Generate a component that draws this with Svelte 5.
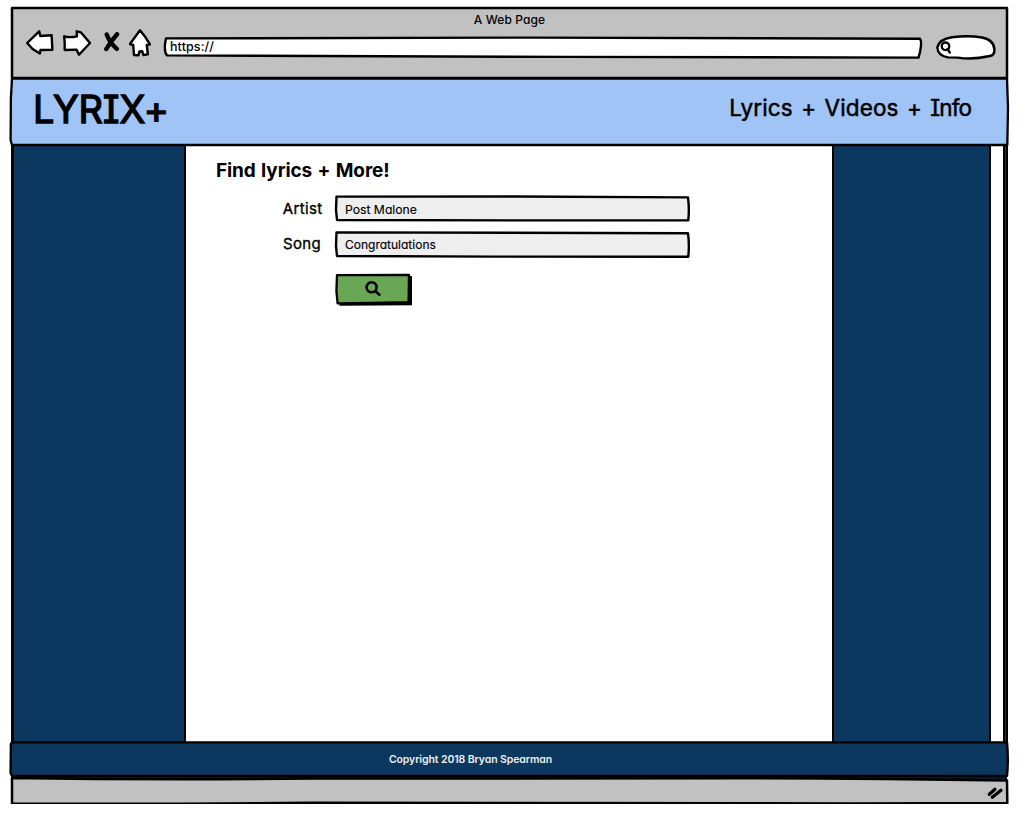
<script>
  let artist = $state('Post Malone');
  let song = $state('Congratulations');
</script>

{#snippet sketch(d, fill, width = 2.5)}
  <svg class="sketch" aria-hidden="true"><path {d} {fill} stroke="#000" stroke-width={width} stroke-linejoin="round" /></svg>
{/snippet}

<div class="window">
  <div class="chrome">
    {@render sketch('M0 0L995 0L995 70L0 70Z', '#c1c1c1')}
    <div class="title">A Web Page</div>
    <div class="toolbar">
      <svg class="back" width="28" height="26" viewBox="0 0 28 26"><path d="M1.2 13L13.2 1.3L14.3 6L25.6 5.2L26.4 19.8L14.5 20L13.8 23.6L6.6 19Z" /></svg>
      <svg class="forward" width="28" height="26" viewBox="0 0 28 26"><path d="M1.2 6.3Q7 8 14 6.3L13.7 1.3L18 2.5L27 13L16 24.7L13.5 19.6L1.7 20L1.7 13Z" /></svg>
      <svg class="stop" width="16" height="20" viewBox="0 0 16 20"><path d="M2.7 2.5Q6 11 12.8 16.8M13.1 2.3Q6.2 10 2.3 17" /></svg>
      <svg class="home" width="22" height="28" viewBox="0 0 22 28"><path d="M11 1.3Q16 7 21 15.3L17.8 16L18.8 25.4L14.4 26L13.2 22.2L10.4 22.5L9.5 26.2L5 26L4.2 16L.9 15Z" /></svg>
      <div class="address">
        {@render sketch('M1 .4Q180 -.4 370 -.4L755 .8Q757.2 3 755 14L753.5 19.6L400 18.9L2 17.4Q-1 14 .2 5Z', '#fff', 2.4)}
        <span>https://</span>
      </div>
      <svg class="find" width="60" height="26" viewBox="0 0 60 26">
        <path d="M1.3 12.5Q3 4 16 2.2Q33 .3 46 2.5Q58 5 58.3 14Q59 20 54 21Q36 25 22 22.6L12 22.4Q2 21 1.3 12.5Z" />
        <g><circle cx="9.5" cy="11.3" r="3.8" /><path d="M11.5 14L13.8 17.5" /></g>
      </svg>
    </div>
  </div>

  <header>
    {@render sketch('M0 .6L995 .6L996 30L995.3 67L0 67L-1.4 62L-1.1 20Z', '#a0c4f5', 2.3)}
    <h1>LYRIX+</h1>
    <p>Lyrics + Videos + <span>Info</span></p>
  </header>

  <main>
    <div class="side left"></div>
    <section>
      <h2>Find lyrics + More!</h2>
      <form onsubmit={(e) => e.preventDefault()}>
        <label for="artist">Artist</label>
        <div class="field">
          {@render sketch('M.5 .6L180 .5L352 1.4Q353.5 13 352.3 24.3L180 24.4L1 24L0 14Z', '#eee', 2.4)}
          <input id="artist" bind:value={artist} spellcheck="false" />
        </div>
        <label for="song">Song</label>
        <div class="field">
          {@render sketch('M.5 .4L352 1.2Q353.5 12 352.3 24.7L160 24.6L1 24L0 14Z', '#eee', 2.4)}
          <input id="song" bind:value={song} spellcheck="false" />
        </div>
        <button aria-label="Search">
          <svg class="sketch" aria-hidden="true">
            <path d="M3.5 5L76 1L76 30.2L3.5 30.7Z" fill="#000" />
            <path d="M1 .2L73 0L72.6 27.2L33 27.8L1.6 28.4L.4 16Z" fill="#6aa754" stroke="#000" stroke-width="2.3" stroke-linejoin="round" />
          </svg>
          <svg class="lens" width="18" height="18" viewBox="0 0 18 18"><circle cx="6.6" cy="7.2" r="5" /><path d="M10.2 11L14.4 14.7" /></svg>
        </button>
      </form>
    </section>
    <div class="side right"></div>
    <div class="scroll"></div>
  </main>

  <footer>
    {@render sketch('M0 .4L995 .4Q996.6 18 995 34L0 34L-1.4 31L-1.1 2Z', '#0c3860', 2.4)}
    <span>Copyright 2018 Bryan Spearman</span>
  </footer>
  <div class="status">
    {@render sketch('M0 1Q140 3 300 1.6L720 1.2Q860 1.5 995 3.5L995.3 26L840 26.4L300 25.7Q140 27.2 0 26.4Z', '#c1c1c1', 2.5)}
    <svg class="grip" width="18" height="15" viewBox="0 0 18 15"><path d="M2.3 9.3L7.9 4.2M5.3 12.3L14 5.2" /></svg>
  </div>
</div>

<style>
  :global(body) { margin: 0; background: #fff; }
  .window {
    width: 995px; margin-left: 12px; padding-top: 8px;
    font-family: Inter, "Liberation Sans", sans-serif;
    font-feature-settings: "cv11", "cv08";
    color: #000;
  }
  .chrome, header, footer, .status, .address, .field, button { position: relative; }
  .sketch { position: absolute; inset: 0; width: 100%; height: 100%; overflow: visible; }
  .sketch ~ * { position: relative; }
  svg { fill: none; stroke-linecap: round; stroke-linejoin: round; flex: none; display: block; }

  .chrome { height: 70px; }
  .title { height: 22px; line-height: 23px; text-align: center; font-size: 12px; letter-spacing: .1px; font-weight: 500; }
  .toolbar { display: flex; align-items: flex-start; padding-left: 13.5px; }
  .toolbar > svg { stroke: #000; stroke-width: 2.4; fill: #fff; }
  .forward { margin-left: 9.5px; }
  .toolbar > .stop { margin: 2px 0 0 13px; stroke-width: 4.4; fill: none; }
  .home { margin: -1px 0 0 9px; }
  .address { width: 756px; height: 20px; margin: 8px 0 0 14px; }
  .address span { display: block; padding-left: 5px; line-height: 18px; font-size: 12.5px; letter-spacing: .1px; font-weight: 500; }
  .find { margin: 5px 0 0 15px; }
  .find g { stroke-width: 2.3; }

  header { height: 68px; display: flex; justify-content: space-between; }
  h1 { margin: 8px 0 0 21px; font-size: 38px; line-height: 46px; font-weight: 400; letter-spacing: -.2px; -webkit-text-stroke: 1.3px #000; }
  header p { margin: 14px 36px 0 0; font-size: 22.5px; line-height: 32px; letter-spacing: .15px; word-spacing: 1.8px; -webkit-text-stroke: .5px #000; }
  header p span { letter-spacing: -.9px; }

  main { display: flex; height: 596px; border-left: 3px solid #000; margin-left: -1px; }
  .side { background: #0c3860; box-sizing: border-box; border: 0 solid #000; }
  .left { width: 172px; border-right-width: 2px; }
  .right { width: 159px; border-left-width: 2px; border-right-width: 2px; }
  section { width: 646px; box-sizing: border-box; padding: 13px 0 0 30px; }
  .scroll { flex: 1; border-right: 2px solid #000; margin-right: -1px; box-shadow: inset -1px 0 #0c3860, inset -3px 0 #000; }
  h2 { margin: 0; font-size: 19px; line-height: 24px; font-weight: 700; letter-spacing: -.1px; word-spacing: 1px; }
  form { display: grid; grid-template-columns: 107px 353px; column-gap: 13px; row-gap: 10px; margin-top: 13px; }
  label { text-align: right; font-size: 15px; line-height: 25px; letter-spacing: .35px; -webkit-text-stroke: .35px #000; padding-right: .5px; }
  label[for="song"] { line-height: 23px; padding-right: 2px; }
  .field { height: 26px; }
  input {
    display: block; box-sizing: border-box; width: 100%; height: 26px; margin: 0; padding: 1px 8px 0 9px;
    border: 0; outline: 0; background: none; font: 12.2px Inter, "Liberation Sans", sans-serif;
    font-feature-settings: inherit; color: #000; -webkit-text-stroke: .15px #000;
  }
  #song { font-size: 12px; padding: 0 8px 1px 9px; }
  button { grid-column: 2; width: 76px; height: 31px; margin: 6.5px 0 0; padding: 5px 0 0 29px; border: 0; background: none; display: flex; align-items: flex-start; }
  .lens { stroke: #000; stroke-width: 2.6; }

  footer { height: 35px; text-align: center; font-size: 10.5px; font-weight: 600; line-height: 35px; letter-spacing: -.1px; color: #eee; }
  footer span { display: block; width: 917px; }
  .status { height: 27px; display: flex; justify-content: flex-end; align-items: center; background: #06192b; }
  .grip { margin: 4px 2px 0 0; stroke: #000; stroke-width: 3.2; }
</style>
